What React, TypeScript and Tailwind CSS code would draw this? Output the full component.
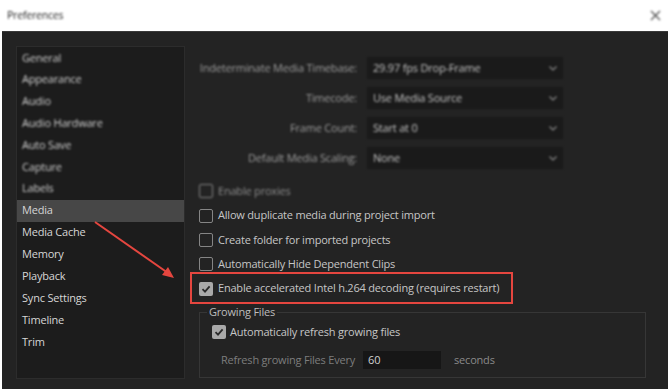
import React from "react";

const font = { fontFamily: '"Open Sans", "Segoe UI", sans-serif' };

function Check({ checked }: { checked?: boolean }) {
  return checked ? (
    <div className="w-[14px] h-[14px] rounded-[2px] bg-[#a9a9a9] flex items-center justify-center shrink-0">
      <svg width="10" height="10" viewBox="0 0 10 10">
        <path d="M1.5 5.2 L4 7.6 L8.6 2.4" fill="none" stroke="#2a2a2a" strokeWidth="1.8" />
      </svg>
    </div>
  ) : (
    <div className="w-[14px] h-[14px] rounded-[2px] border-[1.5px] border-[#858585] shrink-0" />
  );
}

function Dropdown({ label, value }: { label: string; value: string }) {
  return (
    <div className="flex items-center h-[22px]">
      <div className="w-[159px] text-right text-[#9d9d9d] pr-[1px] whitespace-nowrap">{label}</div>
      <div className="ml-[9px] w-[196px] h-[22px] bg-[#1a1a1a] flex items-center justify-between pl-[6px] pr-[6px] text-[#c4c4c4]">
        <span>{value}</span>
        <svg width="8" height="5" viewBox="0 0 8 5">
          <path d="M0.5 0.5 L4 4 L7.5 0.5" fill="none" stroke="#8a8a8a" strokeWidth="1.2" />
        </svg>
      </div>
    </div>
  );
}

export default function App() {
  const blurred = ["General", "Appearance", "Audio", "Audio Hardware", "Auto Save", "Capture", "Labels"];
  const clear = ["Media Cache", "Memory", "Playback", "Sync Settings", "Timeline", "Trim"];
  return (
    <div className="w-[670px] h-[392px] bg-white flex flex-col overflow-hidden text-[11px] tracking-[-0.2px]" style={font}>
      <div className="h-[31px] flex items-center justify-between pl-[7px] pr-[9px] blur-[0.8px] shrink-0">
        <span className="text-[10.5px] text-[#222]">Preferences</span>
        <svg width="11" height="11" viewBox="0 0 11 11">
          <path d="M1 1 L10 10 M10 1 L1 10" stroke="#555" strokeWidth="1.4" />
        </svg>
      </div>
      <div className="flex-1 mx-[2px] mb-[3px] bg-[#232323] border-t border-[#3a3a3a] relative flex">
        <div className="ml-[14px] mt-[14px] w-[169px] h-[333px] bg-[#1c1c1c] border border-[#2c2c2c] flex flex-col">
          <div className="blur-[0.9px] flex flex-col text-[#cfcfcf]">
            {blurred.map((t) => (
              <div key={t} className="h-[21.8px] flex items-center pl-[5px]">{t}</div>
            ))}
          </div>
          <div className="h-[22px] flex items-center pl-[5px] bg-[#474747] text-[#d4d4d4]">Media</div>
          {clear.map((t) => (
            <div key={t} className="h-[22px] flex items-center pl-[5px] text-[#d6d6d6]">{t}</div>
          ))}
        </div>
        <div className="ml-[14px] mt-[25px] flex-1 flex flex-col">
          <div className="blur-[0.9px] flex flex-col gap-[8px]">
            <Dropdown label="Indeterminate Media Timebase:" value="29.97 fps Drop-Frame" />
            <Dropdown label="Timecode:" value="Use Media Source" />
            <Dropdown label="Frame Count:" value="Start at 0" />
            <Dropdown label="Default Media Scaling:" value="None" />
          </div>
          <div className="mt-[10px] flex flex-col text-[#c6c6c6]">
            <div className="h-[24px] flex items-center gap-[5px] blur-[0.8px]">
              <Check />
              <span className="text-[#8f8f8f]">Enable proxies</span>
            </div>
            <div className="h-[25px] flex items-center gap-[5px]">
              <Check />
              <span>Allow duplicate media during project import</span>
            </div>
            <div className="h-[24px] flex items-center gap-[5px]">
              <Check />
              <span>Create folder for imported projects</span>
            </div>
            <div className="h-[24px] flex items-center gap-[5px]">
              <Check />
              <span>Automatically Hide Dependent Clips</span>
            </div>
            <div className="h-[25px] flex items-center gap-[5px]">
              <Check checked />
              <span>Enable accelerated Intel h.264 decoding (requires restart)</span>
            </div>
          </div>
          <fieldset className="mt-[3px] mr-[22px] border border-[#363636] h-[74px] pl-[12px]">
            <legend className="-ml-[5px] px-[2px] text-[#bdbdbd]">Growing Files</legend>
            <div className="flex items-center gap-[4px] mt-[3px] text-[#c6c6c6]">
              <Check checked />
              <span>Automatically refresh growing files</span>
            </div>
            <div className="flex items-center mt-[11px]">
              <span className="text-[#7d7d7d] ml-[9px]">Refresh growing Files Every</span>
              <div className="ml-[8px] w-[78px] h-[18px] bg-[#161616] flex items-center pl-[5px] text-[#d0d0d0]">60</div>
              <span className="ml-[13px] text-[#8a8a8a]">seconds</span>
            </div>
          </fieldset>
        </div>
        <div className="absolute left-[188px] top-[240px] w-[323px] h-[32px] border-2 border-[#e5463f]" />
        <svg className="absolute left-0 top-0" width="666" height="358" viewBox="0 0 666 358">
          <line x1="93" y1="190" x2="166" y2="241" stroke="#e5463f" strokeWidth="2" />
          <path d="M172 246 L160 243 L166 235 Z" fill="#e5463f" />
        </svg>
      </div>
    </div>
  );
}
